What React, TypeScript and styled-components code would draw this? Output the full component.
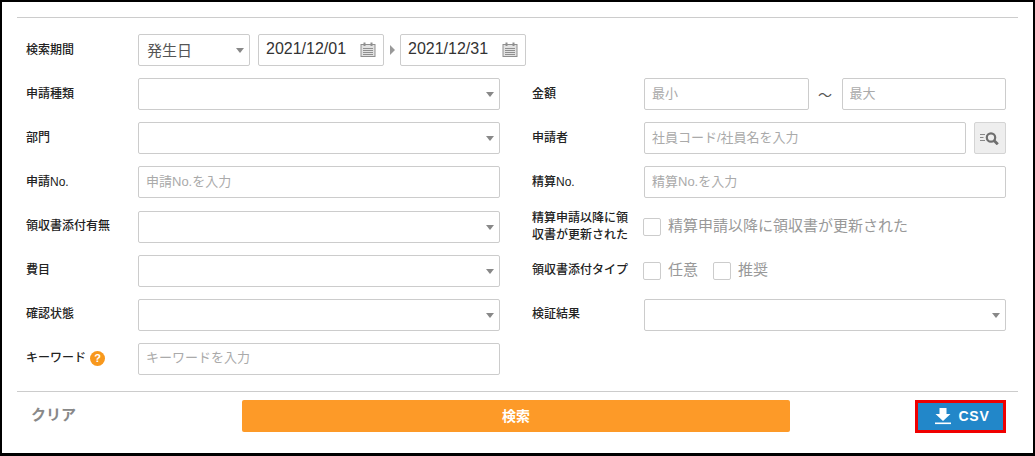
import React from "react";
import styled, { createGlobalStyle } from "styled-components";

const FONT = `"Liberation Sans", "Noto Sans CJK JP", sans-serif`;

const GlobalStyle = createGlobalStyle`
  html, body { margin: 0; padding: 0; background: #fff; }
  * { box-sizing: border-box; }
  body { font-family: ${FONT}; color: #333; }
`;

const Frame = styled.div`
  width: 1035px;
  height: 456px;
  border: 2px solid #000;
  border-bottom-width: 3px;
  padding: 15px 15px 0;
  background: #fff;
  overflow: hidden;
`;

const Divider = styled.hr`
  margin: 0;
  border: 0;
  border-top: 1px solid #ccc;
`;

const Form = styled.div`
  display: grid;
  grid-template-columns: 474px 474px;
  column-gap: 32px;
  row-gap: 12.15px;
  grid-auto-rows: 32px;
  padding: 16px 0 16px 9px;
`;

const Field = styled.div`
  display: flex;
  align-items: center;
  min-width: 0;
`;

const WideField = styled(Field)`
  grid-column: 1 / -1;
`;

const Label = styled.div`
  flex: 0 0 112px;
  font-size: 12px;
  line-height: 17px;
  font-weight: 500;
  color: #222;
  display: flex;
  align-items: center;
  gap: 4px;
  padding-right: 14px;
`;

const SelectBox = styled.div<{ $width?: number }>`
  position: relative;
  flex: ${(p) => (p.$width ? `0 0 ${p.$width}px` : "1 1 auto")};
  height: 32px;
  margin-right: ${(p) => (p.$width ? "8px" : "0")};
  border: 1px solid #ccc;
  border-radius: 2px;
  background: #fff;
  display: flex;
  align-items: center;
  padding: 0 0 2px 8px;
  font-size: 15px;
  color: #555;
  &::after {
    content: "";
    position: absolute;
    right: 5px;
    top: 13px;
    border-left: 4px solid transparent;
    border-right: 4px solid transparent;
    border-top: 5px solid #888;
  }
`;

const TextInput = styled.input`
  flex: 1 1 auto;
  min-width: 0;
  width: 100%;
  height: 32px;
  border: 1px solid #ccc;
  border-radius: 2px;
  background: #fff;
  padding: 0 7px 2px;
  font-family: ${FONT};
  font-size: 13px;
  outline: none;
  &::placeholder {
    color: #aaa;
    opacity: 1;
  }
`;

const DateBox = styled.div`
  flex: 0 0 126px;
  height: 32px;
  border: 1px solid #ccc;
  border-radius: 2px;
  display: flex;
  align-items: center;
  justify-content: space-between;
  padding: 0 7px 2px;
  font-size: 16px;
  line-height: 28px;
  color: #333;
`;

const DateRange = styled.div`
  display: flex;
  align-items: center;
`;

const RangeArrow = styled.span`
  width: 16px;
  display: flex;
  justify-content: center;
  &::before {
    content: "";
    border-top: 5px solid transparent;
    border-bottom: 5px solid transparent;
    border-left: 5px solid #999;
  }
`;

const Tilde = styled.span`
  flex: 0 0 33px;
  text-align: center;
  font-size: 14px;
  color: #555;
`;

const SearchButton = styled.button`
  flex: 0 0 32px;
  height: 32px;
  margin-left: 8px;
  border: 1px solid #d4d4d4;
  border-radius: 2px;
  background: #eee;
  padding: 0;
  display: flex;
  align-items: center;
  justify-content: center;
`;

const Check = styled.label`
  display: inline-flex;
  align-items: center;
  gap: 7px;
  margin-right: 15px;
  font-size: 15px;
  line-height: 20px;
  color: #999;
  &:first-of-type {
    margin-left: -1px;
  }
`;

const CheckBox = styled.span`
  width: 18px;
  height: 18px;
  border: 1px solid #ccc;
  border-radius: 2px;
  background: #fff;
`;

const CheckText = styled.span`
  position: relative;
  top: -1px;
`;

const Help = styled.span`
  width: 15px;
  height: 15px;
  flex: none;
  border-radius: 50%;
  background: #f8981d;
  color: #fff;
  font-size: 11px;
  font-weight: 700;
  line-height: 15px;
  text-align: center;
`;

const Footer = styled.div`
  display: grid;
  grid-template-columns: 211px 548px 1fr;
  align-items: center;
  padding: 8px 12px 0 14px;
`;

const ClearLink = styled.a`
  font-size: 15px;
  font-weight: 700;
  color: #888;
  padding-bottom: 5px;
`;

const PrimaryButton = styled.button`
  height: 32px;
  border: 0;
  border-radius: 2px;
  background: #fd9a28;
  color: #fff;
  font-family: ${FONT};
  font-size: 14px;
  font-weight: 700;
  padding: 0 0 2px;
`;

const CsvButton = styled.button`
  justify-self: end;
  width: 91px;
  height: 33px;
  border: 3px solid #f00000;
  background: #2287c9;
  color: #fff;
  font-family: ${FONT};
  font-size: 14px;
  font-weight: 700;
  letter-spacing: 0.7px;
  display: flex;
  align-items: center;
  justify-content: center;
  gap: 7px;
  padding: 0 0 0 2px;
`;

const CalendarIcon = () => (
  <svg width="16" height="15" viewBox="0 0 16 15" aria-hidden="true">
    <rect x="1" y="2.5" width="14" height="12" fill="#e2e2e2" stroke="#8f8f8f" />
    <rect x="3.5" y="0.5" width="2" height="3.5" fill="#8f8f8f" />
    <rect x="10.5" y="0.5" width="2" height="3.5" fill="#8f8f8f" />
    <path d="M3 6.5h10M3 8.5h10M3 10.5h10M3 12.5h10" stroke="#8f8f8f" strokeWidth="1" />
  </svg>
);

const ListSearchIcon = () => (
  <svg width="20" height="13" viewBox="0 0 20 13" aria-hidden="true">
    <path d="M0 2.5h5M0 5.5h3.5M0 8.5h5" stroke="#888" strokeWidth="1" />
    <circle cx="11" cy="5.5" r="4.2" fill="none" stroke="#6f6f6f" strokeWidth="2.2" />
    <path d="M14.2 8.7l3.6 3.6" stroke="#6f6f6f" strokeWidth="2.8" />
  </svg>
);

const DownloadIcon = () => (
  <svg width="18" height="18" viewBox="0 0 18 18" aria-hidden="true">
    <path d="M5.5 1h7v6h4l-7.5 7-7.5-7h4z" fill="#fff" />
    <rect x="1" y="15.5" width="16" height="1.6" fill="#fff" />
  </svg>
);

const App: React.FC = () => {
  return (
    <Frame>
      <GlobalStyle />
      <Divider />
      <Form>
        <WideField>
          <Label>検索期間</Label>
          <DateRange>
            <SelectBox $width={112}>発生日</SelectBox>
            <DateBox>
              2021/12/01
              <CalendarIcon />
            </DateBox>
            <RangeArrow />
            <DateBox>
              2021/12/31
              <CalendarIcon />
            </DateBox>
          </DateRange>
        </WideField>

        <Field>
          <Label>申請種類</Label>
          <SelectBox />
        </Field>
        <Field>
          <Label>金額</Label>
          <TextInput placeholder="最小" />
          <Tilde>～</Tilde>
          <TextInput placeholder="最大" />
        </Field>

        <Field>
          <Label>部門</Label>
          <SelectBox />
        </Field>
        <Field>
          <Label>申請者</Label>
          <TextInput placeholder="社員コード/社員名を入力" />
          <SearchButton>
            <ListSearchIcon />
          </SearchButton>
        </Field>

        <Field>
          <Label>申請No.</Label>
          <TextInput placeholder="申請No.を入力" />
        </Field>
        <Field>
          <Label>精算No.</Label>
          <TextInput placeholder="精算No.を入力" />
        </Field>

        <Field>
          <Label>領収書添付有無</Label>
          <SelectBox />
        </Field>
        <Field>
          <Label>精算申請以降に領収書が更新された</Label>
          <Check>
            <CheckBox />
            <CheckText>精算申請以降に領収書が更新された</CheckText>
          </Check>
        </Field>

        <Field>
          <Label>費目</Label>
          <SelectBox />
        </Field>
        <Field>
          <Label>領収書添付タイプ</Label>
          <Check>
            <CheckBox />
            <CheckText>任意</CheckText>
          </Check>
          <Check>
            <CheckBox />
            <CheckText>推奨</CheckText>
          </Check>
        </Field>

        <Field>
          <Label>確認状態</Label>
          <SelectBox />
        </Field>
        <Field>
          <Label>検証結果</Label>
          <SelectBox />
        </Field>

        <Field>
          <Label>
            キーワード
            <Help>?</Help>
          </Label>
          <TextInput placeholder="キーワードを入力" />
        </Field>
      </Form>
      <Divider />
      <Footer>
        <ClearLink>クリア</ClearLink>
        <PrimaryButton>検索</PrimaryButton>
        <CsvButton>
          <DownloadIcon />
          CSV
        </CsvButton>
      </Footer>
    </Frame>
  );
};

export default App;
